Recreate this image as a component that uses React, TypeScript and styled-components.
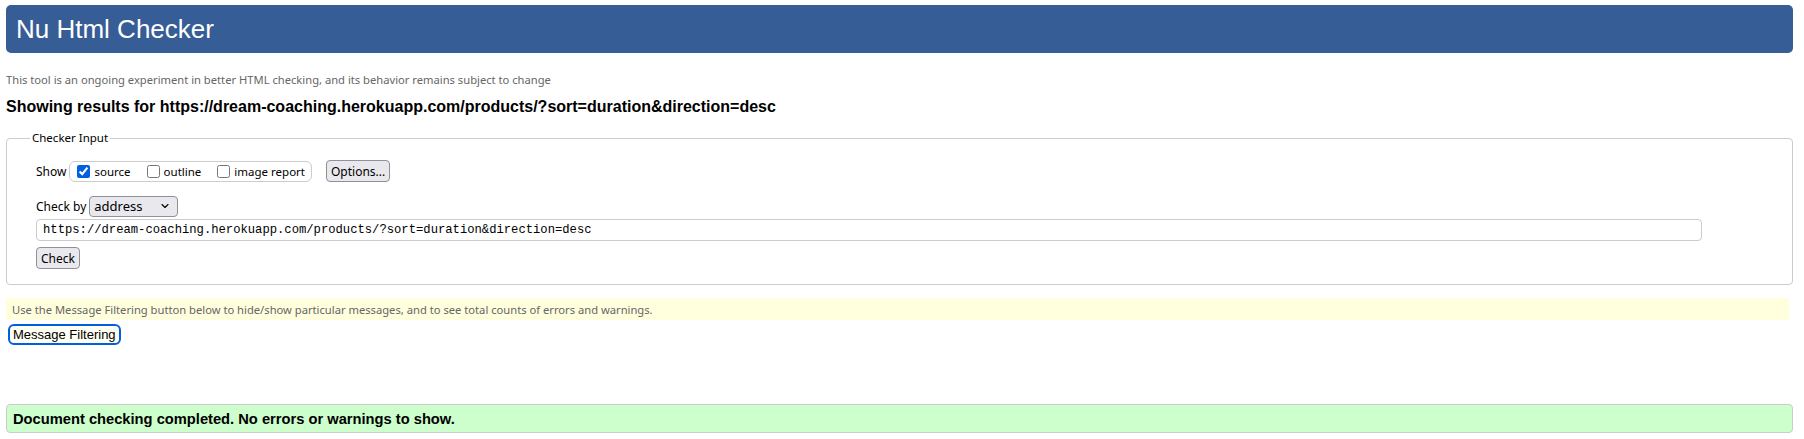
import styled, { createGlobalStyle } from "styled-components";
import { ChevronDown } from "lucide-react";

const GlobalStyle = createGlobalStyle`
  html, body {
    margin: 0;
    padding: 0;
    background: #ffffff;
  }
`;

const uiFont = `"Noto Sans", "Open Sans", sans-serif`;

const Page = styled.div`
  display: flex;
  flex-direction: column;
  padding: 5px 11px 0 6px;
  font-family: ${uiFont};
  color: #000;
`;

const Header = styled.header`
  display: flex;
  align-items: center;
  height: 48px;
  padding-left: 10px;
  background: #365d95;
  border-radius: 5px;
  color: #ffffff;
  font-family: "Liberation Sans", Arial, sans-serif;
  font-size: 26px;
`;

const Tagline = styled.p`
  margin: 19px 0 0;
  font-size: 11.2px;
  line-height: 16px;
  color: #666666;
`;

const ResultsHeading = styled.h2`
  margin: 9px 0 0;
  font-family: "Liberation Sans", Arial, sans-serif;
  font-size: 16px;
  font-weight: 700;
  line-height: 20px;
`;

const Fieldset = styled.fieldset`
  display: flex;
  flex-direction: column;
  margin: 13px 0 0;
  padding: 6px 90px 15px 29px;
  border: 1px solid #cccccc;
  border-radius: 4px;
  min-width: 0;
`;

const Legend = styled.legend`
  margin-left: -6px;
  padding: 0 2px;
  font-size: 11.5px;
  line-height: 16px;
`;

const Row = styled.div<{ $mt?: number }>`
  display: flex;
  align-items: center;
  gap: 3px;
  margin-top: ${({ $mt }) => $mt ?? 0}px;
  font-size: 12px;
  height: 22px;
`;

const OptionGroup = styled.div`
  display: flex;
  align-items: center;
  gap: 16px;
  height: 19px;
  padding: 0 6px 0 7px;
  border: 1px solid #cccccc;
  border-radius: 6px;
  margin-right: 11px;
`;

const OptionLabel = styled.label`
  display: flex;
  align-items: center;
  gap: 4px;
  font-size: 11.5px;
`;

const Checkbox = styled.input.attrs({ type: "checkbox" })`
  width: 13px;
  height: 13px;
  margin: 0;
  accent-color: #0060df;
`;

const Button = styled.button`
  display: inline-flex;
  align-items: center;
  height: 22px;
  padding: 0 4px;
  background: #e9e9ed;
  border: 1px solid #8f8f9d;
  border-radius: 4px;
  font-family: ${uiFont};
  font-size: 12px;
  color: #000;
`;

const SelectBox = styled.div`
  display: flex;
  align-items: center;
  justify-content: space-between;
  width: 89px;
  height: 21px;
  box-sizing: border-box;
  padding: 0 6px 0 4px;
  background: #e9e9ed;
  border: 1px solid #8f8f9d;
  border-radius: 4px;
  font-size: 13px;
`;

const UrlInput = styled.input`
  margin-top: 2px;
  height: 22px;
  box-sizing: border-box;
  padding: 0 6px;
  border: 1px solid #cccccc;
  border-radius: 4px;
  font-family: "Liberation Mono", monospace;
  font-size: 12.2px;
  color: #000;
  outline: none;
`;

const CheckRow = styled.div`
  display: flex;
  margin-top: 6px;
`;

const Notice = styled.div`
  display: flex;
  align-items: center;
  margin: 13px 4px 0 0;
  height: 22px;
  padding-left: 6px;
  background: #ffffdd;
  font-size: 11.2px;
  color: #666666;
`;

const FilterButton = styled.button`
  align-self: flex-start;
  margin: 4px 0 0 2px;
  height: 21px;
  padding: 0 3px;
  background: #fffff4;
  border: 2px solid #0060df;
  border-radius: 6px;
  font-family: "Liberation Sans", Arial, sans-serif;
  font-size: 13px;
  color: #000;
`;

const Success = styled.div`
  display: flex;
  align-items: center;
  margin-top: 59px;
  height: 27px;
  padding-left: 6px;
  background: #ccffcc;
  border: 1px solid #cccccc;
  border-radius: 4px;
  font-family: "Liberation Sans", Arial, sans-serif;
  font-size: 14.7px;
  font-weight: 700;
`;

const url = "https://dream-coaching.herokuapp.com/products/?sort=duration&direction=desc";

const App = () => {
  return (
    <>
      <GlobalStyle />
      <Page>
        <Header>Nu Html Checker</Header>
        <Tagline>
          This tool is an ongoing experiment in better HTML checking, and its behavior remains subject to change
        </Tagline>
        <ResultsHeading>Showing results for {url}</ResultsHeading>
        <Fieldset>
          <Legend>Checker Input</Legend>
          <Row $mt={8}>
            Show
            <OptionGroup>
              <OptionLabel>
                <Checkbox defaultChecked />
                source
              </OptionLabel>
              <OptionLabel>
                <Checkbox />
                outline
              </OptionLabel>
              <OptionLabel>
                <Checkbox />
                image report
              </OptionLabel>
            </OptionGroup>
            <Button>Options...</Button>
          </Row>
          <Row $mt={13}>
            Check by
            <SelectBox>
              address
              <ChevronDown size={12} strokeWidth={2.2} />
            </SelectBox>
          </Row>
          <UrlInput defaultValue={url} />
          <CheckRow>
            <Button>Check</Button>
          </CheckRow>
        </Fieldset>
        <Notice>
          Use the Message Filtering button below to hide/show particular messages, and to see total counts of errors and warnings.
        </Notice>
        <FilterButton>Message Filtering</FilterButton>
        <Success>Document checking completed. No errors or warnings to show.</Success>
      </Page>
    </>
  );
};

export default App;
